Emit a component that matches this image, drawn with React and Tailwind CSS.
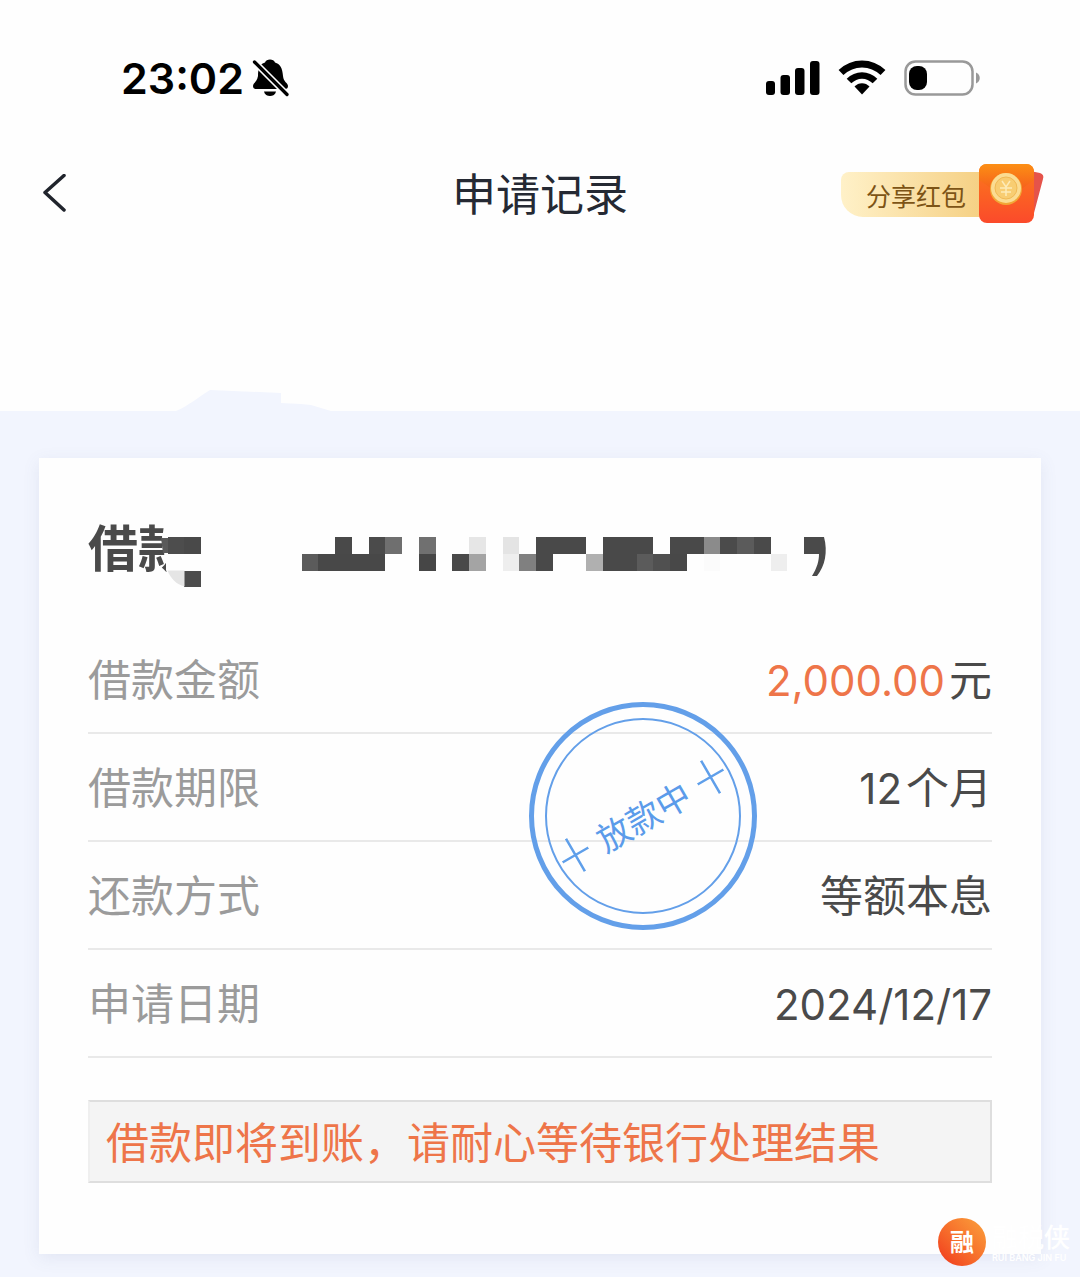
const ROWS = [
  { label: "借款金额", value: "2,000.00", unit: "元", highlight: true },
  { label: "借款期限", value: "12", unit: "个月" },
  { label: "还款方式", text: "等额本息" },
  { label: "申请日期", value: "2024/12/17" },
];

// [column, row, columns wide, fill]
const TILES = [
  [-8, 0, 1, "#4d4d4d"], [-7, 0, 1, "#494949"], [-7, 2, 1, "#4c4c4c"],
  [2, 0, 1, "#494949"], [4, 0, 1, "#4b4b4b"], [5, 0, 1, "#6f6f6f"],
  [7, 0, 1, "#707070"], [10, 0, 1, "#e6e6e6"], [12, 0, 1, "#e4e4e4"],
  [14, 0, 3, "#494949"], [18, 0, 3, "#494949"], [22, 0, 2, "#494949"],
  [24, 0, 1, "#8b8b8b"], [25, 0, 1, "#4b4b4b"], [26, 0, 1, "#5b5b5b"],
  [27, 0, 1, "#4a4a4a"],
  [0, 1, 1, "#5b5b5b"], [1, 1, 4, "#484848"], [7, 1, 1, "#464646"],
  [9, 1, 1, "#494949"], [10, 1, 1, "#a4a4a4"], [12, 1, 1, "#eeeeee"],
  [13, 1, 1, "#808080"], [14, 1, 1, "#494949"], [17, 1, 1, "#b0b0b0"],
  [18, 1, 2, "#494949"], [20, 1, 1, "#5b5b5b"], [21, 1, 1, "#505050"],
  [22, 1, 1, "#484848"], [24, 1, 1, "#fbfbfb"], [28, 1, 1, "#eeeeee"],
];

const TILE = 16.75;

function MutedBell() {
  return (
    <svg width="38" height="38" viewBox="0 0 38 38" aria-hidden="true">
      <path
        d="M1 27c0-3 4-4 5-10C6 9 8 5 13 3.500C14-.5 22-.5 23 3.500C28 5 30.500 9 31 17c.5 6 5 7 5 10 0 2-1 3-3 3H4c-2 0-3-1-3-3z"
        fill="#000"
      />
      <path d="M12 32.500h12c-1 6-11 6-12 0z" fill="#000" />
      <path d="M0 .5L37 37.500" stroke="#fefefe" strokeWidth="6.500" />
      <path d="M2.500 3L35 35.500" stroke="#000" strokeWidth="3.300" strokeLinecap="round" />
    </svg>
  );
}

function Signal() {
  return (
    <svg width="54" height="34" viewBox="0 0 54 34" aria-hidden="true">
      <rect x="0" y="20" width="9" height="14" rx="3" />
      <rect x="14.500" y="14" width="9.500" height="20" rx="3" />
      <rect x="29" y="7" width="9.500" height="27" rx="3" />
      <rect x="44" y="0" width="9.500" height="34" rx="3" />
    </svg>
  );
}

function Wifi() {
  return (
    <svg width="48" height="36" viewBox="0 0 48 36" fill="none" stroke="#000" aria-hidden="true">
      <path d="M3 12.500C15 1 33 1 45 12.500" strokeWidth="7" />
      <path d="M11 21C18.500 13.500 29.500 13.500 37 21" strokeWidth="6.500" />
      <path d="M16.500 26.500c4-4.500 11-4.500 15 0L24 34.500z" fill="#000" stroke="none" />
    </svg>
  );
}

function Battery() {
  return (
    <svg width="76" height="36" viewBox="0 0 76 36" aria-hidden="true">
      <rect x="1.500" y="1.500" width="67" height="33" rx="10" fill="none" stroke="#999" strokeWidth="2.500" />
      <rect x="5" y="6" width="18" height="24" rx="8" />
      <path d="M72 12.500c5 2 5 9 0 11z" fill="#999" />
    </svg>
  );
}

function Envelope() {
  return (
    <svg className="relative -ml-1" width="66" height="62" viewBox="0 0 66 62" aria-hidden="true">
      <defs>
        <linearGradient id="env" x1="0" y1="0" x2="0" y2="1">
          <stop offset="0" stopColor="#fb7a1b" />
          <stop offset="1" stopColor="#fb4a2b" />
        </linearGradient>
        <linearGradient id="flap" x1="0" y1="0" x2="0" y2="1">
          <stop offset="0" stopColor="#fc8f14" />
          <stop offset="1" stopColor="#f4531f" />
        </linearGradient>
      </defs>
      <path d="M52 8l10 2c3 1 4 3 3 6L56 50c-1 4-4 6-7 7z" fill="#e5534a" />
      <rect x="1" y="1" width="55" height="59" rx="8" fill="url(#env)" />
      <path d="M1 17V9c0-5 3-8 8-8h39c5 0 8 3 8 8v8L38 30c-5 4-13 4-18 0z" fill="url(#flap)" />
      <circle cx="28" cy="26" r="16" fill="#f2a636" />
      <circle cx="28" cy="25" r="15" fill="#fbdc92" />
      <circle cx="28" cy="25" r="11" fill="#f8cd72" stroke="#f0b955" />
      <path d="M24 18l4 6 4-6M28 24v9M22 25h12M23 29h10" fill="none" stroke="#fdebb8" strokeWidth="1.500" />
    </svg>
  );
}

function Mosaic() {
  return (
    <svg
      className="absolute top-0 left-[73px]"
      width="670"
      height="74"
      viewBox="161 514 670 74"
      aria-hidden="true"
    >
      <path d="M167 514h41v73h-24c-8-2-15-8-18-17v-16l-4-17z" fill="#fefefe" />
      <path d="M161 538h8v15h-6z" fill="#5a5a5a" />
      <g shapeRendering="crispEdges">
        {TILES.map(([col, row, span, fill]) => (
          <rect
            key={`${col}-${row}`}
            x={301.7 + col * TILE}
            y={537 + row * TILE}
            width={span * TILE}
            height={TILE}
            fill={fill}
          />
        ))}
      </g>
      <path d="M167.500 570.500h17v16c-8-2-14-8-17-16z" fill="#e5e5e5" />
      <path d="M804 537h20c4 15 1 29-7 39h-5c5-8 7-15 7-22h-15z" fill="#4a4a4a" />
    </svg>
  );
}

function Plus() {
  return (
    <svg width="30" height="38" viewBox="0 0 30 38" stroke="#5f9fea" strokeWidth="2.500" aria-hidden="true">
      <path d="M0 19H30M15 0V38" />
    </svg>
  );
}

function Stamp() {
  return (
    <div className="absolute left-[441px] top-[76px] size-[228px] rounded-full border-5 border-[#639fe9] p-[11px]">
      <div className="flex size-full items-center justify-center rounded-full border-2 border-[#639fe9]">
        <div className="flex shrink-0 -rotate-30 items-center gap-3 text-[34px] leading-none whitespace-nowrap text-[#5b9bea]">
          <Plus />
          <span className="pt-1">放款中</span>
          <Plus />
        </div>
      </div>
    </div>
  );
}

function StatusBar() {
  return (
    <div className="flex h-[156px] items-center justify-between pr-[100px] pl-[121px]">
      <div className="flex items-center gap-2">
        <span className="text-[43px] leading-none font-semibold text-black">23:02</span>
        <MutedBell />
      </div>
      <div className="flex items-center gap-[18px]">
        <Signal />
        <Wifi />
        <Battery />
      </div>
    </div>
  );
}

function NavBar() {
  return (
    <header className="grid h-[76px] grid-cols-3 items-center px-9">
      <button type="button" aria-label="返回" className="justify-self-start">
        <svg width="32" height="40" viewBox="0 0 32 40" fill="none" aria-hidden="true">
          <path d="M28 1.500L9 18.500l19 17.500" stroke="#20242c" strokeWidth="3.500" strokeLinecap="round" strokeLinejoin="round" />
        </svg>
      </button>
      <h1 className="justify-self-center pt-0.5 text-[44px] leading-none whitespace-nowrap text-[#252933]">申请记录</h1>
      <button type="button" className="flex items-center justify-self-end">
        <span className="flex h-[45px] items-center rounded-tl-lg rounded-bl-[22px] bg-linear-to-r from-[#fff1c8] to-[#f5d083] pt-0.5 pr-4 pl-[25px] font-['Noto_Sans_CJK_SC',sans-serif] text-[25px] leading-none whitespace-nowrap text-[#7d5416]">
          分享红包
        </span>
        <Envelope />
      </button>
    </header>
  );
}

function Watermark() {
  return (
    <div className="absolute right-[10px] bottom-[11px] flex items-center gap-[6px] text-white">
      <div className="flex size-12 items-center justify-center rounded-full bg-linear-to-tr from-[#ef2f1c] to-[#faa13c] pt-0.5 text-2xl leading-none font-bold">
        融
      </div>
      <div className="w-[78px] pt-0.5 whitespace-nowrap">
        <div className="text-[26px] leading-[30px] font-medium">融税侠</div>
        <div className="text-[9px] leading-[10px] font-semibold">RUI BANG JIN FU</div>
      </div>
    </div>
  );
}

export default function App() {
  return (
    <div className="relative flex min-h-screen flex-col bg-[#fefefe] font-[Inter,'Noto_Sans_CJK_SC',sans-serif]">
      <StatusBar />
      <NavBar />

      <svg className="mt-[157px] ml-[176px]" width="160" height="22" viewBox="0 0 160 22" aria-hidden="true">
        <path d="M0 22C14 16 22 8 34 1l71 3v10l20 1 10 1 20 6z" fill="#f2f5fe" />
      </svg>

      <main className="grow bg-[#f2f5fe] px-[39px] pt-[47px] pb-[22px]">
        <section className="bg-[#fefefe] px-[49px] pt-14 pb-[71px] shadow-[0_4px_16px_rgba(90,100,150,0.10)]">
          <div className="relative h-28">
            <h2 className="text-[50px] leading-[70px] font-bold whitespace-nowrap text-[#4a4a4a]">借款</h2>
            <Mosaic />
          </div>

          <div className="relative">
            <dl>
              {ROWS.map((row) => (
                <div
                  key={row.label}
                  className="flex h-[108px] items-center justify-between border-b-2 border-[#e9e9e9] pt-[3px] text-[43px] leading-none"
                >
                  <dt className="text-[#9b9b9b]">{row.label}</dt>
                  <dd className="flex items-center gap-1 text-[#4a4a4a]">
                    {row.value && (
                      <span className={row.highlight ? "text-[42px] text-[#ee7549]" : "text-[42px]"}>{row.value}</span>
                    )}
                    {row.text && <span>{row.text}</span>}
                    {row.unit && <span>{row.unit}</span>}
                  </dd>
                </div>
              ))}
            </dl>
            <Stamp />
          </div>

          <p className="mt-[42px] flex h-[83px] items-center border-2 border-[#dedede] border-l-[#efefef] bg-[#f4f4f4] px-4 pt-[3px] text-[43px] leading-none whitespace-nowrap text-[#ee7549]">
            借款即将到账，请耐心等待银行处理结果
          </p>
        </section>
      </main>

      <Watermark />
    </div>
  );
}
